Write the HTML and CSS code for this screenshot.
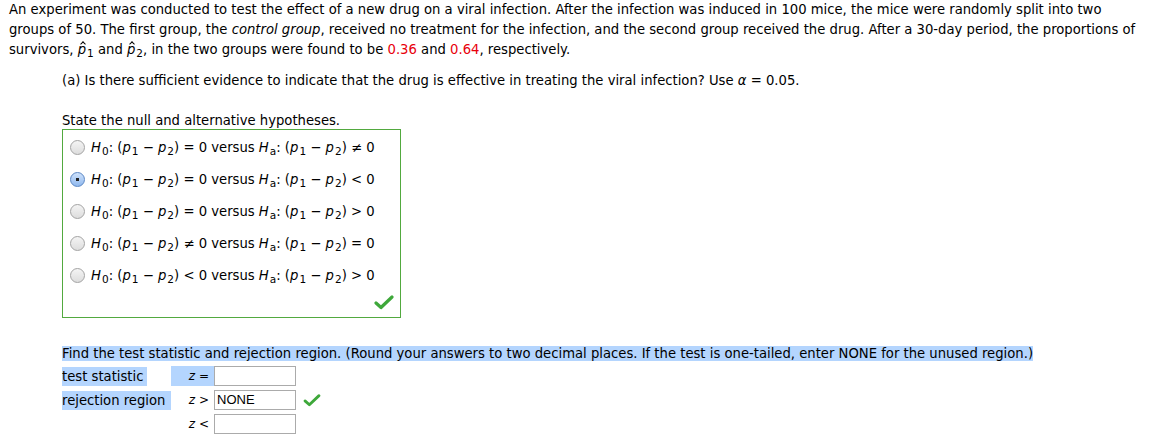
FILE: index.html
```html
<!DOCTYPE html>
<html>
<head>
<meta charset="utf-8">
<link rel="stylesheet" href="styles.css">
</head>
<body>
<div class="page">
  <p class="intro">An experiment was conducted to test the effect of a new drug on a viral infection. After the infection was induced in 100 mice, the mice were randomly split into two groups of 50. The first group, the <i>control group</i>, received no treatment for the infection, and the second group received the drug. After a 30-day period, the proportions of survivors, <i class="hat">p</i><sub>1</sub> and <i class="hat">p</i><sub>2</sub>, in the two groups were found to be <span class="red">0.36</span> and <span class="red">0.64</span>, respectively.</p>
  <div class="part">
    <p class="question">(a) Is there sufficient evidence to indicate that the drug is effective in treating the viral infection? Use <i>α</i> = 0.05.</p>
    <p class="label">State the null and alternative hypotheses.</p>
    <div class="box">
      <div class="opt"><span class="radio"></span><span><i>H</i><sub>0</sub>: (<i>p</i><sub>1</sub> − <i>p</i><sub>2</sub>) = 0 versus <i>H</i><sub>a</sub>: (<i>p</i><sub>1</sub> − <i>p</i><sub>2</sub>) ≠ 0</span></div>
      <div class="opt"><span class="radio on"></span><span><i>H</i><sub>0</sub>: (<i>p</i><sub>1</sub> − <i>p</i><sub>2</sub>) = 0 versus <i>H</i><sub>a</sub>: (<i>p</i><sub>1</sub> − <i>p</i><sub>2</sub>) &lt; 0</span></div>
      <div class="opt"><span class="radio"></span><span><i>H</i><sub>0</sub>: (<i>p</i><sub>1</sub> − <i>p</i><sub>2</sub>) = 0 versus <i>H</i><sub>a</sub>: (<i>p</i><sub>1</sub> − <i>p</i><sub>2</sub>) &gt; 0</span></div>
      <div class="opt"><span class="radio"></span><span><i>H</i><sub>0</sub>: (<i>p</i><sub>1</sub> − <i>p</i><sub>2</sub>) ≠ 0 versus <i>H</i><sub>a</sub>: (<i>p</i><sub>1</sub> − <i>p</i><sub>2</sub>) = 0</span></div>
      <div class="opt"><span class="radio"></span><span><i>H</i><sub>0</sub>: (<i>p</i><sub>1</sub> − <i>p</i><sub>2</sub>) &lt; 0 versus <i>H</i><sub>a</sub>: (<i>p</i><sub>1</sub> − <i>p</i><sub>2</sub>) &gt; 0</span></div>
      <div class="box-foot">
        <svg class="check" width="20" height="16" viewBox="0 0 20 16"><path d="M2 9 L7 13.5 L18 3" fill="none" stroke="#3ea83a" stroke-width="3.2" stroke-linecap="round" stroke-linejoin="round"/></svg>
      </div>
    </div>
    <p class="find"><span class="hl">Find the test statistic and rejection region. (Round your answers to two decimal places. If the test is one-tailed, enter NONE for the unused region.)</span></p>
    <div class="answers">
      <div class="row">
        <span class="name hl">test statistic</span>
        <span class="sym hl"><i>z</i> =</span>
        <span class="field"></span>
      </div>
      <div class="row">
        <span class="name hl wide">rejection region</span>
        <span class="sym"><i>z</i> &gt;</span>
        <span class="field">NONE</span>
        <svg class="check small" width="18" height="14" viewBox="0 0 20 16"><path d="M2 9 L7 13.5 L18 3" fill="none" stroke="#3ea83a" stroke-width="3.2" stroke-linecap="round" stroke-linejoin="round"/></svg>
      </div>
      <div class="row">
        <span class="name wide"></span>
        <span class="sym"><i>z</i> &lt;</span>
        <span class="field"></span>
      </div>
    </div>
  </div>
</div>
</body>
</html>
```
FILE: styles.css
```css
html, body {
  margin: 0;
  padding: 0;
  background: #fff;
}
body {
  font-family: "DejaVu Sans", Verdana, sans-serif;
  font-size: 13.2px;
  color: #000;
}
.page {
  padding: 0 10px 0 9px;
}
p {
  margin: 0;
}
.intro {
  line-height: 20px;
}
sub {
  font-size: 0.8em;
  vertical-align: -3px;
  line-height: 0;
  margin-left: 1px;
}
.hat {
  position: relative;
}
.hat::after {
  content: "";
  position: absolute;
  left: 3px;
  top: 0px;
  width: 3px;
  height: 3px;
  border-left: 1px solid #000;
  border-top: 1px solid #000;
  transform: rotate(45deg);
}
.red {
  color: #e8000b;
}
.part {
  padding-left: 53px;
}
.question {
  margin-top: 11px;
  line-height: 20px;
}
.label {
  margin-top: 20px;
  line-height: 20px;
}
.box {
  width: 337px;
  height: 184px;
  border: 1.5px solid #52a93f;
  display: flex;
  flex-direction: column;
  padding-top: 3px;
  box-sizing: content-box;
  margin-top: -2px;
}
.opt {
  display: flex;
  align-items: center;
  height: 31.8px;
  padding-left: 7px;
}
.opt:first-child {
  margin-top: -1px;
}
.radio {
  width: 13px;
  height: 13px;
  border-radius: 50%;
  border: 1px solid #a3a3a3;
  background: linear-gradient(#f4f4f4, #ddd);
  margin-right: 6px;
  flex: none;
}
.radio.on {
  border-color: #5a86c4;
  background: radial-gradient(circle, #222 0 1.6px, transparent 2px), linear-gradient(#cfe2fb, #8fb8ee);
}
.box-foot {
  flex: 1;
  display: flex;
  justify-content: flex-end;
  align-items: flex-end;
  padding: 0 6px 7px 0;
}
.check {
  display: block;
}
.find {
  margin-top: 26px;
  line-height: 19px;
}
.hl {
  background: #b4d5fe;
}
.answers {
  margin-top: 3px;
  display: flex;
  flex-direction: column;
  gap: 4px;
}
.row {
  display: flex;
  align-items: center;
  height: 20px;
}
.name {
  width: 85px;
  line-height: 19px;
  margin-right: 24px;
  white-space: nowrap;
}
.name.wide {
  width: 109px;
  margin-right: 0;
}
.sym {
  width: 43px;
  text-align: right;
  padding-right: 5px;
  box-sizing: border-box;
  line-height: 20px;
  font-size: 12px;
}
.field {
  width: 78px;
  height: 18px;
  border: 1px solid #ababab;
  font-family: "Liberation Sans", Arial, sans-serif;
  font-size: 13px;
  line-height: 18px;
  padding-left: 2px;
  box-sizing: content-box;
}
.check.small {
  margin-left: 7px;
}
```
